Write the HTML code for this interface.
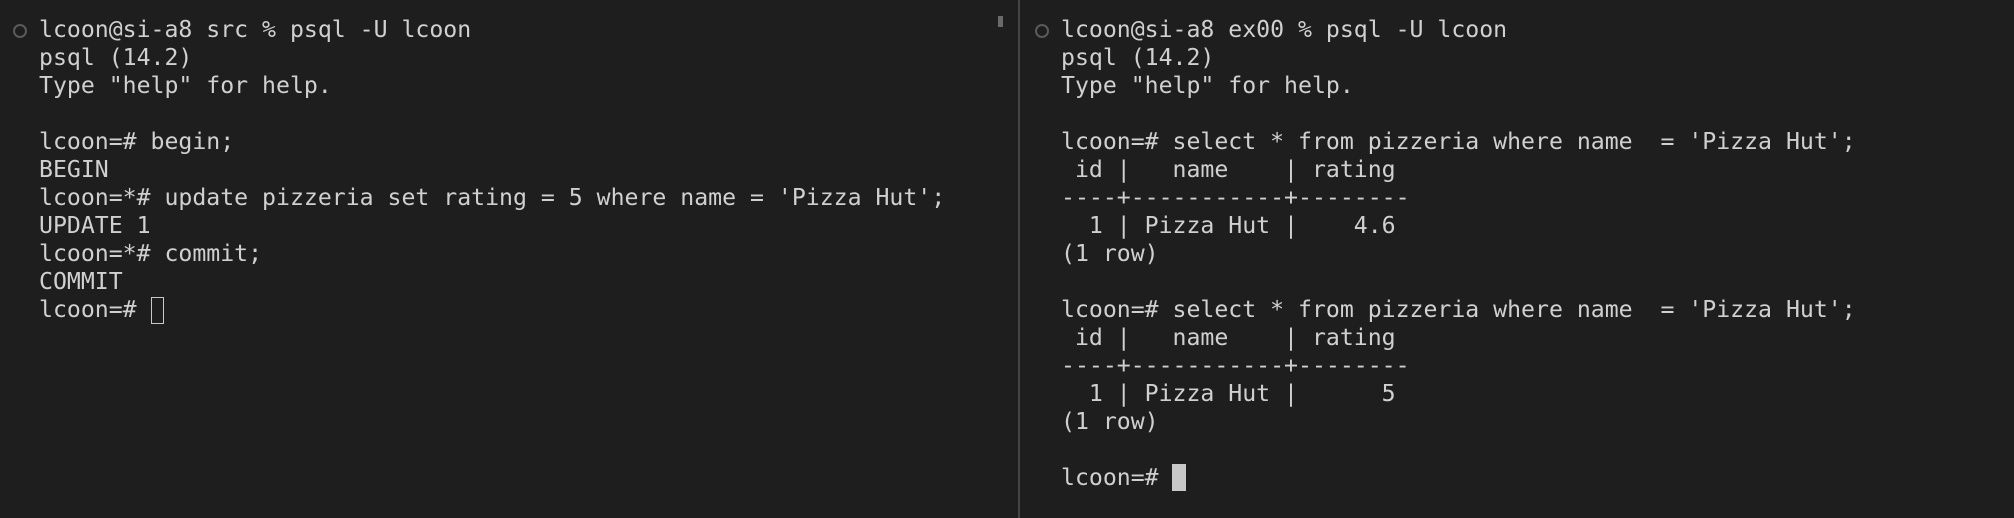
<!DOCTYPE html>
<html><head><style>
html,body{margin:0;padding:0;background:#1e1e1e;width:2014px;height:518px;overflow:hidden}
pre{position:absolute;margin:0;font-family:"DejaVu Sans Mono","Liberation Mono",monospace;font-size:23.17px;line-height:28px;color:#d0d0d0;white-space:pre}
.circ{position:absolute;width:10px;height:10px;border:2px solid #5a5a5a;border-radius:50%}
</style></head><body>
<div class="circ" style="left:13px;top:24px"></div>
<pre style="left:39px;top:16.3px">lcoon@si-a8 src % psql -U lcoon
psql (14.2)
Type "help" for help.

lcoon=# begin;
BEGIN
lcoon=*# update pizzeria set rating = 5 where name = 'Pizza Hut';
UPDATE 1
lcoon=*# commit;
COMMIT
lcoon=# </pre>
<div style="position:absolute;left:151px;top:297px;width:11px;height:25px;border:1.5px solid #c8c8c8"></div>
<div style="position:absolute;left:998px;top:16px;width:5px;height:11px;background:#6a6a6a"></div>
<div style="position:absolute;left:1018px;top:0;width:2px;height:518px;background:#454545"></div>
<div class="circ" style="left:1035px;top:24px"></div>
<pre style="left:1061px;top:16.3px">lcoon@si-a8 ex00 % psql -U lcoon
psql (14.2)
Type "help" for help.

lcoon=# select * from pizzeria where name  = 'Pizza Hut';
 id |   name    | rating
----+-----------+--------
  1 | Pizza Hut |    4.6
(1 row)

lcoon=# select * from pizzeria where name  = 'Pizza Hut';
 id |   name    | rating
----+-----------+--------
  1 | Pizza Hut |      5
(1 row)

lcoon=# </pre>
<div style="position:absolute;left:1172px;top:464px;width:14px;height:27px;background:#c8c8c8"></div>
</body></html>
